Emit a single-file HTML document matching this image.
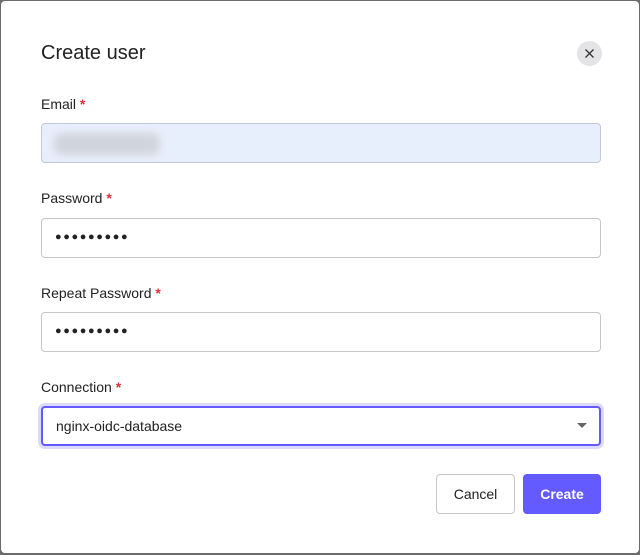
<!DOCTYPE html><html><head><style>
*{box-sizing:border-box;margin:0;padding:0}
body{width:640px;height:555px;background:#6b6b6b;font-family:"Liberation Sans",sans-serif;position:relative;overflow:hidden}
.d{position:absolute;left:1px;top:1px;width:638px;height:552px;background:#fff;border-radius:4px}
.t{position:absolute;left:40px;top:41px;font-size:20px;color:#222;}
.x{position:absolute;left:576px;top:40px;width:25px;height:25px;border-radius:50%;background:#e4e4e7}
.l{position:absolute;left:40px;font-size:14px;color:#222}
.l b{color:#e0303a;font-weight:bold}
.i{position:absolute;left:40px;width:560px;height:40px;border:1px solid #c8c8cc;border-radius:4px;background:#fff}
.dots{position:absolute;left:13px;top:12px;font-size:11px;letter-spacing:1.6px;color:#222}
</style></head><body><div class="d">
<div class="t">Create user</div>
<div class="x"><svg width="25" height="25" viewBox="0 0 25 25"><path d="M8.5 8.5L16.5 16.5M16.5 8.5L8.5 16.5" stroke="#333" stroke-width="1.3"/></svg></div>
<div class="l" style="top:95px">Email <b>*</b></div>
<div class="i" style="top:122px;background:#e8effc;border-color:#c3c9d6"><div style="position:absolute;left:12px;top:9px;width:106px;height:22px;background:#d0d4dc;filter:blur(4px);border-radius:8px"></div></div>
<div class="l" style="top:189px">Password <b>*</b></div>
<div class="i" style="top:217px"><span class="dots">●●●●●●●●●</span></div>
<div class="l" style="top:284px">Repeat Password <b>*</b></div>
<div class="i" style="top:311px"><span class="dots">●●●●●●●●●</span></div>
<div class="l" style="top:378px">Connection <b>*</b></div>
<div class="i" style="top:405px;border:2px solid #635bff;box-shadow:0 0 0 3px #dcdaff"><span style="position:absolute;left:13px;top:10px;font-size:14px;color:#222">nginx-oidc-database</span><span style="position:absolute;right:12px;top:15px;border-left:5px solid transparent;border-right:5px solid transparent;border-top:5px solid #666"></span></div>
<div style="position:absolute;left:435px;top:473px;width:79px;height:40px;border:1px solid #c8c8cc;border-radius:4px;text-align:center;line-height:38px;font-size:14px;color:#222">Cancel</div>
<div style="position:absolute;left:522px;top:473px;width:78px;height:40px;background:#635bff;border-radius:4px;text-align:center;line-height:40px;font-size:14px;font-weight:bold;color:#fff">Create</div>
</div></body></html>
